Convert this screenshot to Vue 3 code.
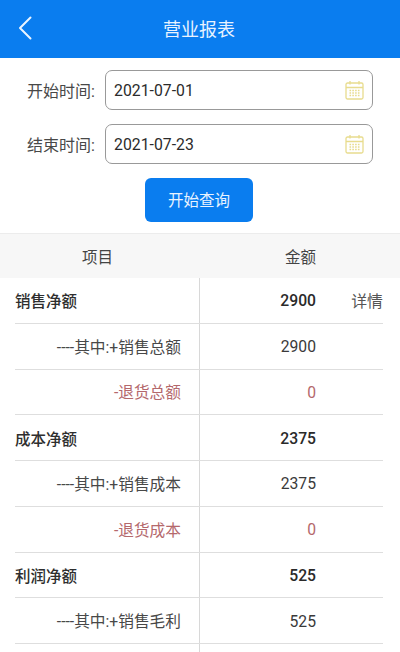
<script setup>
const dates = [
  { label: '开始时间:', value: '2021-07-01' },
  { label: '结束时间:', value: '2021-07-23' },
]
const rows = [
  { name: '销售净额', amount: '2900', type: 'main', detail: '详情' },
  { name: '----其中:+销售总额', amount: '2900', type: 'sub' },
  { name: '-退货总额', amount: '0', type: 'neg' },
  { name: '成本净额', amount: '2375', type: 'main' },
  { name: '----其中:+销售成本', amount: '2375', type: 'sub' },
  { name: '-退货成本', amount: '0', type: 'neg' },
  { name: '利润净额', amount: '525', type: 'main' },
  { name: '----其中:+销售毛利', amount: '525', type: 'sub' },
  { name: '', amount: '', type: 'sub' },
]
</script>

<template>
  <div class="page">
    <header class="bar">
      <svg class="back" width="14" height="24" viewBox="0 0 14 24" fill="none">
        <path d="M12.5 1.5 2 12l10.5 10.5" stroke="#eaf4ff" stroke-width="2" stroke-linecap="round" stroke-linejoin="round" />
      </svg>
      <h1 class="title">营业报表</h1>
    </header>

    <section class="form">
      <div v-for="d in dates" :key="d.label" class="field">
        <span class="label">{{ d.label }}</span>
        <div class="input">
          <span class="date">{{ d.value }}</span>
          <svg class="cal" width="19" height="20" viewBox="0 0 19 20" fill="none" stroke="#e8dc8e" stroke-width="1.3">
            <rect x="1" y="3" width="17" height="16" rx="1.5" />
            <path d="M1 7.5h17M5 1v3.5M14 1v3.5" />
            <path d="M4.5 10.5h10M4.5 13h10M4.5 15.5h10" stroke-dasharray="1.6 1.2" />
          </svg>
        </div>
      </div>
      <button class="query" type="button">开始查询</button>
    </section>

    <section class="table">
      <div class="thead">
        <span class="th-name">项目</span>
        <span class="th-amount">金额</span>
      </div>
      <div v-for="(r, i) in rows" :key="i" class="row" :class="r.type">
        <div class="name">{{ r.name }}</div>
        <div class="amount">{{ r.amount }}</div>
        <div class="detail">{{ r.detail }}</div>
      </div>
    </section>
  </div>
</template>

<style scoped>
.page {
  width: 400px;
  height: 652px;
  overflow: hidden;
  background: #fff;
  font-family: Roboto, "Noto Sans CJK SC", sans-serif;
  color: #333;
}
.bar {
  height: 58px;
  box-sizing: border-box;
  padding-bottom: 2px;
  background: #0a7def;
  display: flex;
  align-items: center;
  justify-content: center;
  position: relative;
}
.back {
  position: absolute;
  left: 18px;
  top: 16px;
}
.title {
  margin: 0 2px 0 0;
  font-size: 18px;
  font-weight: 400;
  color: #e8f3ff;
}
.form {
  padding-top: 12px;
  display: flex;
  flex-direction: column;
}
.field {
  display: flex;
  align-items: center;
  height: 40px;
  margin-bottom: 14px;
  padding-left: 27px;
}
.label {
  width: 78px;
  font-size: 16px;
  color: #484848;
}
.input {
  width: 268px;
  height: 40px;
  box-sizing: border-box;
  border: 1px solid #999;
  border-radius: 7px;
  display: flex;
  align-items: center;
  justify-content: space-between;
  padding: 0 8px 0 8px;
  background: #fff;
}
.date {
  font-size: 15.8px;
  color: #2b2b2b;
}
.query {
  align-self: flex-start;
  margin: 0 0 0 145px;
  width: 108px;
  height: 44px;
  padding: 0 0 2px;
  border: 0;
  border-radius: 6px;
  background: #0a7def;
  color: #e8f3ff;
  font: inherit;
  font-size: 15.5px;
}
.table {
  margin-top: 11px;
  border-top: 1px solid #ececec;
}
.thead {
  height: 44px;
  background: #f7f7f7;
  display: grid;
  grid-template-columns: 195px 121px;
  align-items: center;
  font-size: 15.5px;
  color: #444;
}
.th-name {
  justify-self: center;
}
.th-amount {
  justify-self: end;
}
.row {
  height: 45.75px;
  box-sizing: border-box;
  margin: 0 17px 0 15px;
  border-bottom: 1px solid #dedede;
  display: grid;
  grid-template-columns: 185px 116px 1fr;
  font-size: 15.7px;
}
.name {
  border-right: 1px solid #d8d8d8;
  display: flex;
  align-items: center;
  justify-content: flex-end;
  padding-right: 18px;
  color: #484848;
}
.amount {
  display: flex;
  align-items: center;
  justify-content: flex-end;
  padding-top: 1px;
  color: #3a3a3a;
}
.detail {
  display: flex;
  align-items: center;
  justify-content: flex-end;
  color: #555;
  font-size: 15.9px;
}
.main .name {
  justify-content: flex-start;
  font-weight: 500;
  font-size: 15.5px;
  color: #2e2e2e;
}
.main .amount {
  font-weight: 500;
  color: #2a2a2a;
}
.neg .name,
.neg .amount {
  color: #b4686c;
}
</style>
